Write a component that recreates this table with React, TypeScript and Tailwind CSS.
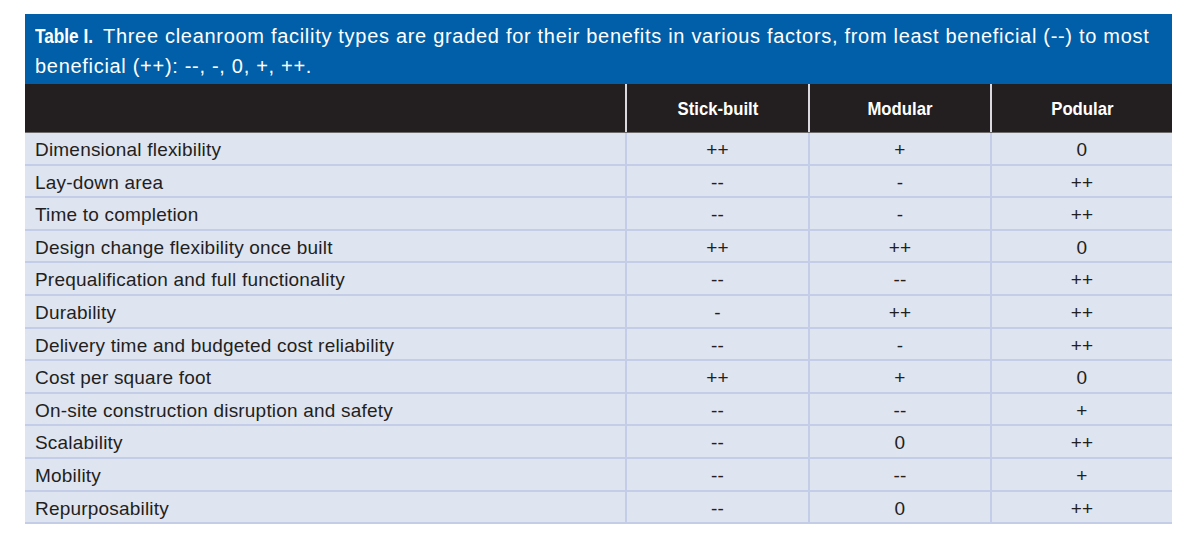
import React from "react";

const rows: [string, string, string, string][] = [
  ["Dimensional flexibility", "++", "+", "0"],
  ["Lay-down area", "--", "-", "++"],
  ["Time to completion", "--", "-", "++"],
  ["Design change flexibility once built", "++", "++", "0"],
  ["Prequalification and full functionality", "--", "--", "++"],
  ["Durability", "-", "++", "++"],
  ["Delivery time and budgeted cost reliability", "--", "-", "++"],
  ["Cost per square foot", "++", "+", "0"],
  ["On-site construction disruption and safety", "--", "--", "+"],
  ["Scalability", "--", "0", "++"],
  ["Mobility", "--", "--", "+"],
  ["Repurposability", "--", "0", "++"],
];

const headers = ["Stick-built", "Modular", "Podular"];

const App = () => {
  return (
    <div className="w-[1200px] h-[546px] bg-white pt-[14px] pl-[25px]" style={{ fontFamily: '"Liberation Sans", Arial, sans-serif' }}>
      <div className="w-[1147px]">
        {/* Caption */}
        <div className="bg-[#005fa8] text-white text-[20px] leading-[30px] tracking-[0.7px] pl-[10px] pt-[7px] pb-[3px] h-[70px] whitespace-nowrap">
          <span className="inline-block font-bold origin-left scale-x-[0.86] w-[68px] tracking-normal">Table I.</span>
          Three cleanroom facility types are graded for their benefits in various factors, from least beneficial (--) to most
          <br />
          beneficial (++): --, -, 0, +, ++.
        </div>

        {/* Header row */}
        <div className="grid grid-cols-[600px_183px_182px_182px] bg-[#231f20] h-[49px] border-b border-[#6d6a6b]">
          <div />
          {headers.map((h) => (
            <div key={h} className="flex items-center justify-center pt-[3px] border-l-2 border-[#d9d9de] text-white font-bold text-[19px]">
              <span className="inline-block scale-x-[0.88]">{h}</span>
            </div>
          ))}
        </div>

        {/* Body */}
        {rows.map((r) => (
          <div key={r[0]} className="grid grid-cols-[600px_183px_182px_182px] bg-[#dfe4f1] h-[32.6px] border-b-2 border-[#c3cde8] text-[#231f20] text-[19px] tracking-[0.2px]">
            <div className="flex items-center pl-[10px] pt-[3px]">{r[0]}</div>
            {r.slice(1).map((v, i) => (
              <div key={i} className="flex items-center justify-center pt-[3px] border-l-2 border-[#c3cde8]">
                {v}
              </div>
            ))}
          </div>
        ))}
      </div>
    </div>
  );
};

export default App;
